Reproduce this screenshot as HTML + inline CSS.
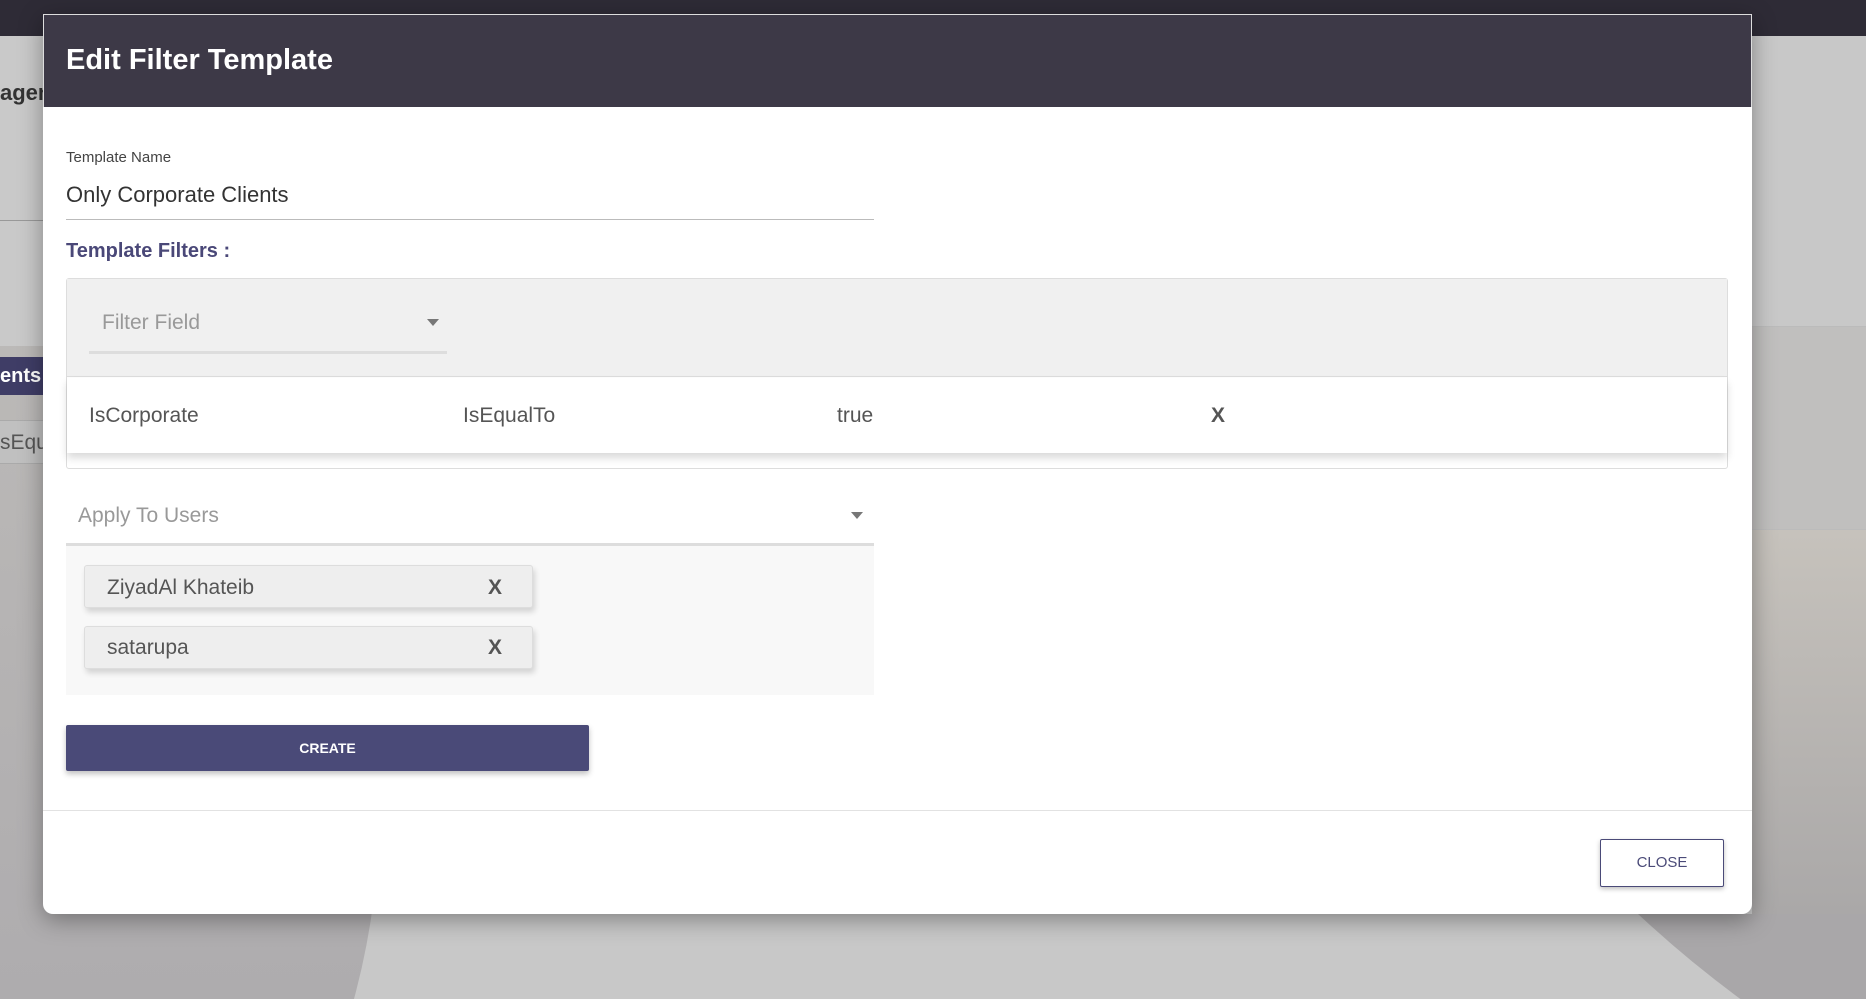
<!DOCTYPE html>
<html><head><meta charset="utf-8"><style>
*{box-sizing:border-box;margin:0;padding:0}
html,body{width:1866px;height:999px;overflow:hidden}
body{position:relative;background:#c8c8c8;font-family:"Liberation Sans",sans-serif}
.abs{position:absolute}
#wrap{position:absolute;left:0;top:0;width:1866px;height:999px;overflow:hidden}
</style></head><body><div id="wrap">
<div class="abs" style="left:0;top:0;width:1866px;height:36px;background:#2e2b36"></div>
<div class="abs" style="left:-250px;top:300px;width:630px;height:699px;overflow:hidden"><div class="abs" style="left:0;top:0;width:630px;height:1000px;border-radius:50%;background:linear-gradient(180deg,#bcbab8,#a8a6aa)"></div></div>
<div class="abs" style="left:1752px;top:326px;width:114px;height:204px;background:#c0bfbe;border-top:1px solid #bbb;border-bottom:1px solid #bbb"></div>
<div class="abs" style="left:1752px;top:530px;width:114px;height:384px;background:linear-gradient(180deg,#c6c2bc,#aaa8a8)"></div>
<div class="abs" style="left:1500px;top:914px;width:366px;height:85px;overflow:hidden">
  <div class="abs" style="left:-215px;top:-1929px;width:2230px;height:2230px;border-radius:50%;background:#a9a7a9"></div>
</div>
<div class="abs" style="left:0;top:36px;width:60px;height:310px;background:#c9c9c9"></div>
<div class="abs" style="left:0;top:80px;font-size:22px;font-weight:bold;color:#333">agen</div>
<div class="abs" style="left:0;top:220px;width:60px;height:1px;background:#999"></div>
<div class="abs" style="left:0;top:357px;width:60px;height:38px;background:#3f3d66;color:#fff;font-weight:bold;font-size:20px;line-height:38px">ents</div>
<div class="abs" style="left:0;top:420px;width:60px;height:44px;background:#c0c0c0;border-top:1px solid #aaa;border-bottom:1px solid #aaa;color:#555;font-size:21px;line-height:44px">sEqu</div>

<div class="abs" style="left:43px;top:14px;width:1709px;height:900px;background:#fff;border-radius:0 0 10px 10px;box-shadow:0 6px 24px rgba(0,0,0,.35);overflow:hidden">
 <div class="abs" style="left:0;top:0;width:1709px;height:93px;background:#3d3947;border:1px solid #ddd;border-bottom:none"></div>
 <div class="abs" style="left:23px;top:30px;font-size:29px;font-weight:bold;color:#fff">Edit Filter Template</div>
 <div class="abs" style="left:23px;top:135px;font-size:15px;color:#444">Template Name</div>
 <div class="abs" style="left:23px;top:168px;font-size:22px;color:#333">Only Corporate Clients</div>
 <div class="abs" style="left:23px;top:205px;width:808px;height:1px;background:#bbb"></div>
 <div class="abs" style="left:23px;top:226px;font-size:20px;font-weight:bold;color:#4a4878">Template Filters :</div>
 <div class="abs" style="left:23px;top:264px;width:1662px;height:191px;border:1px solid #ddd;border-radius:3px;background:#fff">
  <div class="abs" style="left:0;top:0;width:1660px;height:98px;background:#f0f0f0;border-bottom:1px solid #ddd"></div>
  <div class="abs" style="left:35px;top:32px;font-size:21px;color:#999">Filter Field</div>
  <div class="abs" style="left:360px;top:40px;width:0;height:0;border-left:6px solid transparent;border-right:6px solid transparent;border-top:7px solid #777"></div>
  <div class="abs" style="left:22px;top:72px;width:358px;height:3px;background:#ddd"></div>
  <div class="abs" style="left:0;top:99px;width:1660px;height:75px;background:#fff;box-shadow:0 5px 8px rgba(0,0,0,.15)"></div>
  <div class="abs" style="left:22px;top:125px;font-size:21px;color:#555">IsCorporate</div>
  <div class="abs" style="left:396px;top:125px;font-size:21px;color:#555">IsEqualTo</div>
  <div class="abs" style="left:770px;top:125px;font-size:21px;color:#555">true</div>
  <div class="abs" style="left:1144px;top:125px;font-size:21px;font-weight:bold;color:#555">X</div>
 </div>
 <div class="abs" style="left:35px;top:490px;font-size:21px;color:#999">Apply To Users</div>
 <div class="abs" style="left:808px;top:498px;width:0;height:0;border-left:6px solid transparent;border-right:6px solid transparent;border-top:7px solid #777"></div>
 <div class="abs" style="left:23px;top:529px;width:808px;height:152px;background:#f8f8f8;border-top:3px solid #ddd"></div>
 <div class="abs" style="left:41px;top:551px;width:449px;height:43px;background:#eee;border:1px solid #ddd;border-radius:3px;box-shadow:2px 4px 6px rgba(0,0,0,.15)"></div>
 <div class="abs" style="left:64px;top:562px;font-size:21px;color:#555">ZiyadAl Khateib</div>
 <div class="abs" style="left:445px;top:562px;font-size:21px;font-weight:bold;color:#555">X</div>
 <div class="abs" style="left:41px;top:612px;width:449px;height:43px;background:#eee;border:1px solid #ddd;border-radius:3px;box-shadow:2px 4px 6px rgba(0,0,0,.15)"></div>
 <div class="abs" style="left:64px;top:622px;font-size:21px;color:#555">satarupa</div>
 <div class="abs" style="left:445px;top:622px;font-size:21px;font-weight:bold;color:#555">X</div>
 <div class="abs" style="left:23px;top:711px;width:523px;height:46px;background:#4a4a78;border-radius:2px;box-shadow:0 3px 6px rgba(0,0,0,.25);color:#fff;font-size:14px;font-weight:bold;text-align:center;line-height:46px">CREATE</div>
 <div class="abs" style="left:0;top:796px;width:1709px;height:1px;background:#e2e2e2"></div>
 <div class="abs" style="left:1557px;top:825px;width:124px;height:48px;border:1px solid #4a4a78;border-radius:2px;box-shadow:0 2px 5px rgba(0,0,0,.25);color:#4a4a78;font-size:15px;text-align:center;line-height:46px">CLOSE</div>
</div>
</div></body></html>
